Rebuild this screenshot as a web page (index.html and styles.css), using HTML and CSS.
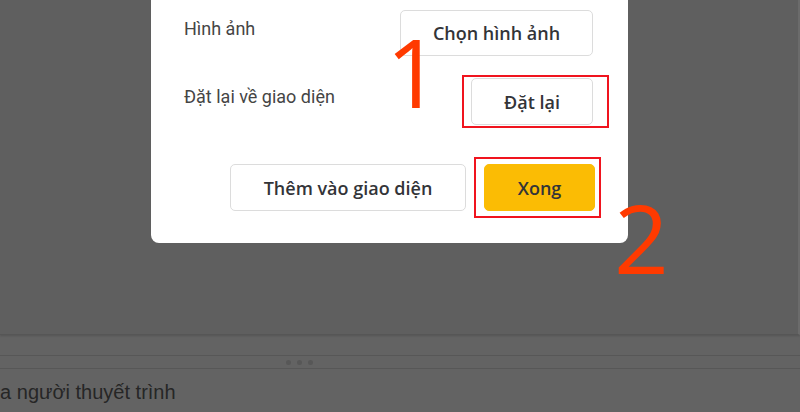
FILE: index.html
```html
<!DOCTYPE html>
<html lang="vi">
<head>
    <meta charset="UTF-8">
    <meta name="viewport" content="width=device-width, initial-scale=1.0">
    <title>Chủ đề - Trang trình bày</title>
    <link rel="stylesheet" href="styles.css">
</head>
<body>

<div class="editor">
    <div class="canvas"></div>
    <div class="strip"></div>
    <div class="resize-bar">
        <span class="dot"></span><span class="dot"></span><span class="dot"></span>
    </div>
    <div class="notes">của người thuyết trình</div>
</div>

<div class="dialog">
    <div class="row">
        <span class="label">Hình ảnh</span>
        <button class="btn btn-image">Chọn hình ảnh</button>
    </div>
    <div class="row">
        <span class="label">Đặt lại về giao diện</span>
        <button class="btn btn-reset">Đặt lại</button>
    </div>
    <div class="footer">
        <button class="btn btn-add">Thêm vào giao diện</button>
        <button class="btn btn-done">Xong</button>
    </div>
</div>

<!-- annotations -->
<div class="mark box-reset"></div>
<div class="mark box-done"></div>
<div class="step step-1">1</div>
<div class="step step-2">2</div>

</body>
</html>
```

FILE: styles.css
```css
body {
    margin: 0;
    background-color: #636363;
    font-family: Roboto, "Liberation Sans", sans-serif;
    overflow: hidden;
}
.editor {
    height: 412px;
    display: flex;
    flex-direction: column;
}
.canvas {
    height: 334px;
    background-color: #5f5f5f;
    border-right: 2px solid #6b6b6b;
    border-bottom: 1px solid #565656;
    box-shadow: 0 1px 2px rgba(0, 0, 0, 0.15);
}
.strip {
    height: 20px;
    border-bottom: 1px solid #575757;
}
.resize-bar {
    height: 12px;
    border-bottom: 1px solid #575757;
    display: flex;
    align-items: center;
    gap: 6px;
    padding-left: 286px;
}
.dot {
    width: 5px;
    height: 5px;
    border-radius: 50%;
    background-color: #575757;
}
.notes {
    margin-left: -21px;
    padding-top: 12px;
    font-family: "Liberation Sans", Arial, sans-serif;
    font-size: 20px;
    color: #262626;
}
.dialog {
    position: absolute;
    left: 151px;
    top: -20px;
    width: 477px;
    box-sizing: border-box;
    padding: 30px 35px 32px 33px;
    background: white;
    border-radius: 8px;
}
.row {
    display: flex;
    justify-content: space-between;
    align-items: flex-start;
    margin-bottom: 22px;
}
.row:nth-child(2) {
    margin-bottom: 39px;
}
.label {
    margin-top: 9px;
    font-size: 18px;
    line-height: 20px;
    color: #454545;
}
.btn {
    height: 47px;
    border: 1px solid #dcdcdc;
    border-radius: 5px;
    background: white;
    font-family: "Open Sans", Roboto, sans-serif;
    font-weight: 600;
    font-size: 18px;
    color: #333438;
    cursor: pointer;
}
.btn-image {
    width: 193px;
    height: 46px;
}
.btn-reset {
    width: 122px;
}
.footer {
    display: flex;
    justify-content: flex-end;
    gap: 18px;
    margin-right: -2px;
}
.btn-add {
    width: 236px;
}
.btn-done {
    width: 111px;
    background-color: #fbbc04;
    border-color: #fbbc04;
}
.mark {
    position: absolute;
    border: 2px solid #f0141e;
    box-sizing: border-box;
}
.box-reset {
    left: 462px;
    top: 75px;
    width: 147px;
    height: 53px;
}
.box-done {
    left: 474px;
    top: 157px;
    width: 127px;
    height: 61px;
}
.step {
    position: absolute;
    font-family: "Open Sans", sans-serif;
    font-weight: 500;
    font-size: 96px;
    line-height: 1;
    color: #ff3a00;
}
.step-1 {
    left: 386px;
    top: 23px;
}
.step-2 {
    left: 614px;
    top: 189px;
}
```
